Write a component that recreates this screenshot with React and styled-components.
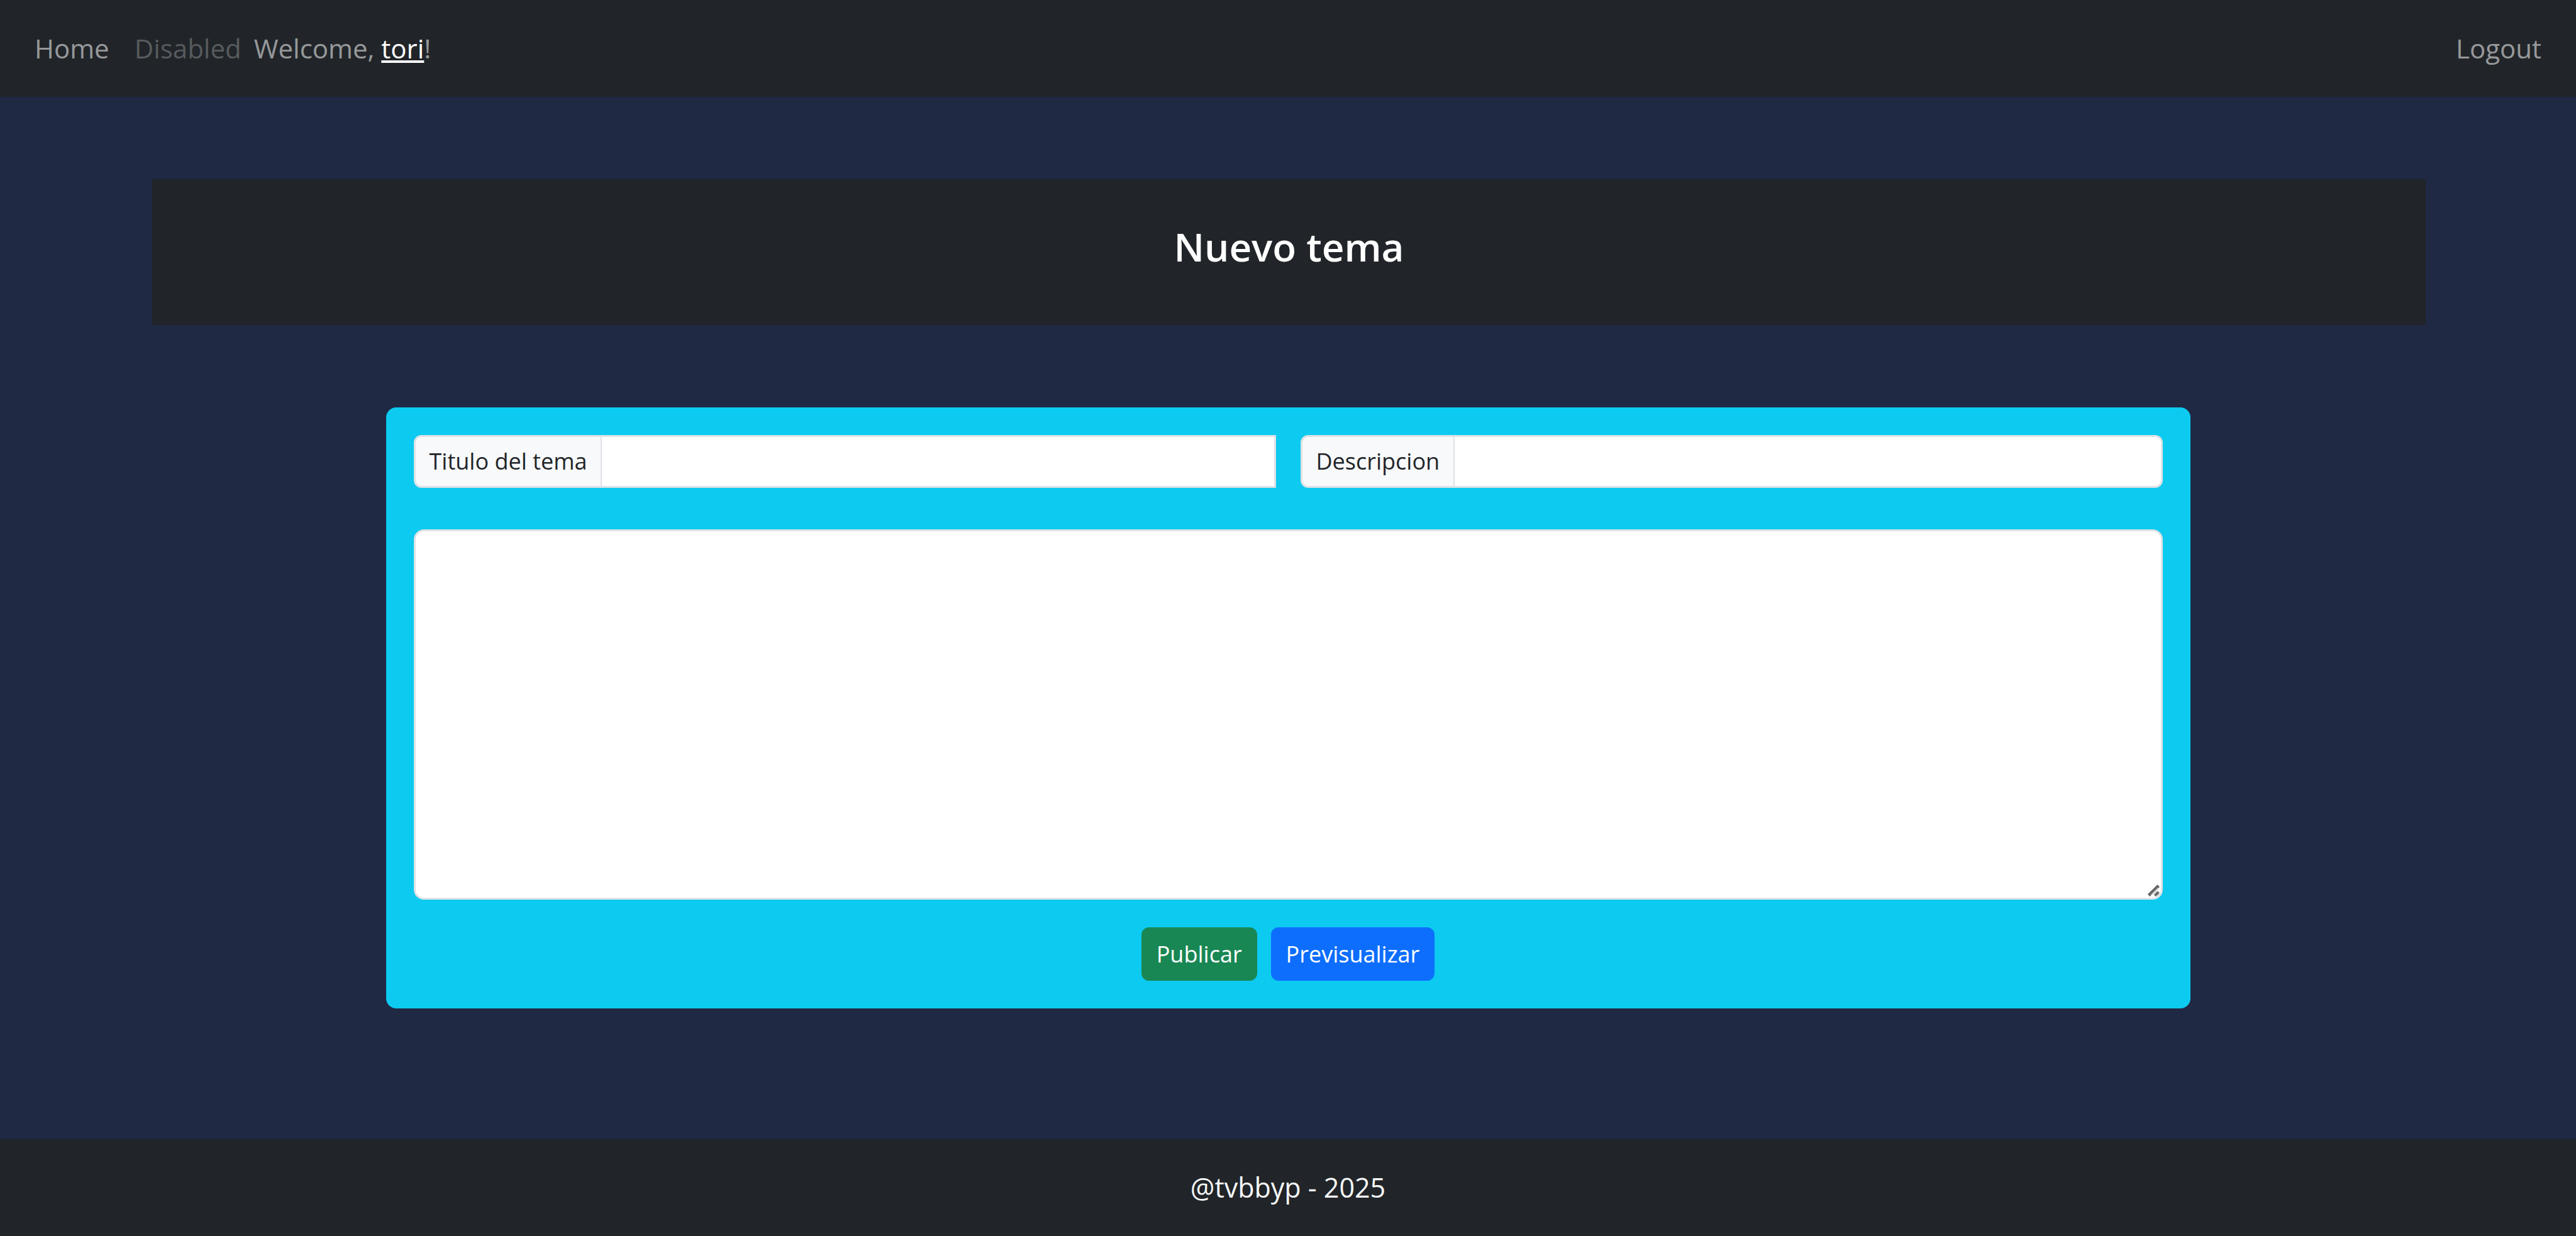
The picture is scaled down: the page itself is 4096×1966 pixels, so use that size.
import React from 'react';
import styled, { createGlobalStyle } from 'styled-components';

const GlobalStyle = createGlobalStyle`
  *, *::before, *::after { box-sizing: border-box; }
  body {
    margin: 0;
    background: #1f2944;
    color: #212529;
    font-family: "Open Sans", "Noto Sans", sans-serif;
    font-size: 36px;
    line-height: 54px;
  }
`;

const Page = styled.div`
  display: flex;
  flex-direction: column;
  min-height: 100vh;
`;

const Navbar = styled.nav`
  display: flex;
  justify-content: space-between;
  padding: 44px 35px;
  background: #212529;
  color: rgba(255, 255, 255, 0.55);
  font-size: 42px;
  line-height: 66px;
`;

const NavGroup = styled.div`
  display: flex;
  align-items: center;
`;

const NavLink = styled.a`
  padding: 0 20px;
  color: ${(p) => (p['aria-disabled'] ? 'rgba(255, 255, 255, 0.25)' : 'inherit')};
  text-decoration: none;
`;

const UserLink = styled.a`
  color: #fff;
  text-decoration: underline;
  text-decoration-thickness: 4px;
  text-underline-offset: 3px;
  text-decoration-skip-ink: none;
`;

const Main = styled.main`
  flex: 1;
  display: flex;
  flex-direction: column;
  gap: 131px;
  padding-top: 131px;
`;

const TitleBox = styled.header`
  margin: 0 239px 0 242px;
  padding: 68px 44px;
  background: #212529;
  text-align: center;
`;

const Title = styled.h1`
  margin: 0 0 17px;
  color: #fff;
  font-size: 62px;
  font-weight: 600;
  line-height: 79px;
`;

const Card = styled.form`
  width: 100%;
  max-width: 2869px;
  margin: 0 auto;
  padding: 44px;
  border-radius: 16px;
  background: #0dcaf0;
`;

const Fields = styled.div`
  display: grid;
  grid-template-columns: 1fr 1fr;
  gap: 39px;
  margin-bottom: 66px;
`;

const InputGroup = styled.div`
  display: flex;
  height: 84px;
`;

const Label = styled.label`
  display: flex;
  align-items: center;
  padding: 0 22px;
  border: 3px solid #dee2e6;
  border-right-width: 2px;
  border-radius: 12px 0 0 12px;
  background: #f8f9fa;
  white-space: nowrap;
`;

const Input = styled.input`
  flex: 1;
  min-width: 0;
  padding: 0 22px;
  border: 3px solid #dee2e6;
  border-left: 0;
  border-radius: ${(p) => (p.$rounded ? '0 12px 12px 0' : '0')};
  background: #fff;
  color: inherit;
  font: inherit;
  outline: none;
`;

const Editor = styled.div`
  position: relative;
  display: flex;
  margin-bottom: 44px;
`;

const TextArea = styled.textarea`
  flex: 1;
  height: 589px;
  padding: 16px 22px;
  border: 3px solid #dee2e6;
  border-radius: 16px;
  background: #fff;
  color: inherit;
  font: inherit;
  outline: none;
  resize: none;
`;

const Grip = styled.svg`
  position: absolute;
  right: 5px;
  bottom: 5px;
  width: 19px;
  height: 19px;
  pointer-events: none;
`;

const Actions = styled.div`
  display: flex;
  justify-content: center;
  gap: 22px;
`;

const Button = styled.button`
  height: 85px;
  padding: 0 24px;
  border: 0;
  border-radius: 12px;
  background: ${(p) => (p.$variant === 'success' ? '#198754' : '#0d6efd')};
  color: #fff;
  font: inherit;
  cursor: pointer;
`;

const Footer = styled.footer`
  padding: 44px 35px;
  background: #212529;
  color: #f8f9fa;
  font-size: 43px;
  line-height: 66px;
  text-align: center;
`;

export default function App() {
  return (
    <>
      <GlobalStyle />
      <Page>
        <Navbar>
          <NavGroup>
            <NavLink href="#home">Home</NavLink>
            <NavLink aria-disabled="true">Disabled</NavLink>
            <span>
              Welcome, <UserLink href="#tori">tori</UserLink>!
            </span>
          </NavGroup>
          <NavGroup>
            <NavLink href="#logout">Logout</NavLink>
          </NavGroup>
        </Navbar>
        <Main>
          <TitleBox>
            <Title>Nuevo tema</Title>
          </TitleBox>
          <Card onSubmit={(e) => e.preventDefault()}>
            <Fields>
              <InputGroup>
                <Label htmlFor="titulo">Titulo del tema</Label>
                <Input id="titulo" type="text" />
              </InputGroup>
              <InputGroup>
                <Label htmlFor="descripcion">Descripcion</Label>
                <Input id="descripcion" type="text" $rounded />
              </InputGroup>
            </Fields>
            <Editor>
              <TextArea aria-label="Contenido" />
              <Grip viewBox="0 0 36 36" aria-hidden="true">
                <path d="M29.5 0 36 7 6.5 36 0 29Z" fill="#666" />
                <path d="M31.5 10 10 31.500" stroke="#c4c4c4" strokeWidth="2.5" />
                <path d="M30 20 36 25 24 36 19 31Z" fill="#666" />
                <path d="M29.500 18.500 18 30" stroke="#c4c4c4" strokeWidth="2.5" />
                <path d="M34 28.500 27.500 35" stroke="#c4c4c4" strokeWidth="3" />
              </Grip>
            </Editor>
            <Actions>
              <Button type="submit" $variant="success">Publicar</Button>
              <Button type="button">Previsualizar</Button>
            </Actions>
          </Card>
        </Main>
        <Footer>@tvbbyp - 2025</Footer>
      </Page>
    </>
  );
}
